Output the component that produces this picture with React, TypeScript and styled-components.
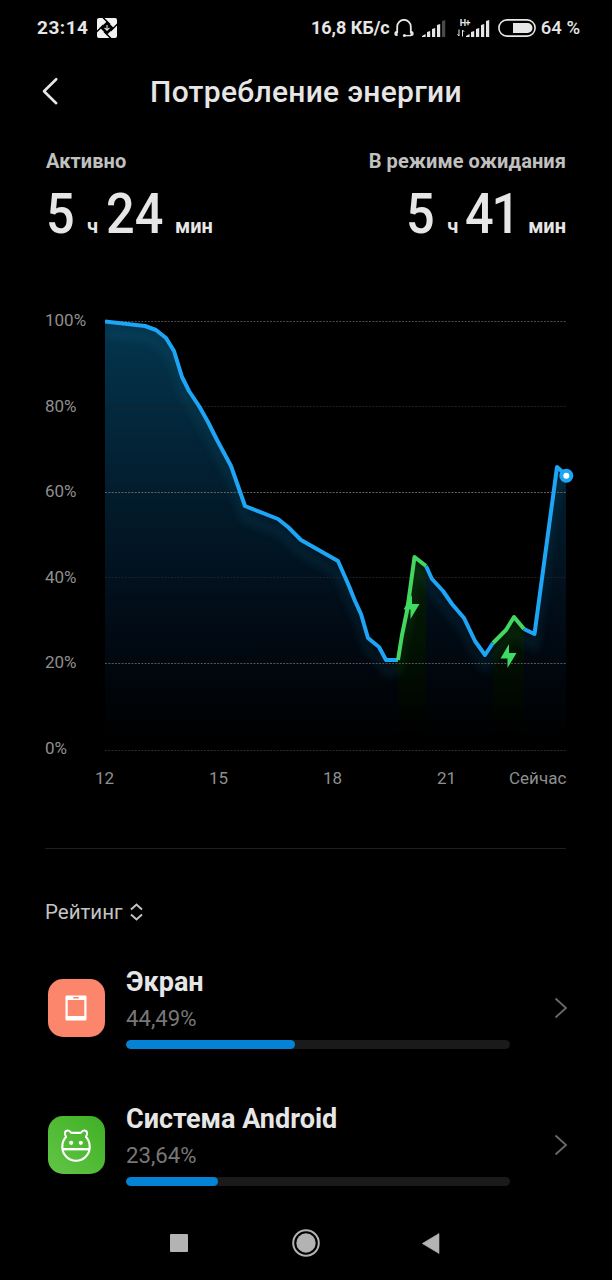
import React from "react";
import styled, { createGlobalStyle } from "styled-components";

const GlobalStyle = createGlobalStyle`
  * { box-sizing: border-box; }
  body { margin: 0; background: #000; font-family: Roboto, sans-serif; color: #e6e6e6; }
  svg { display: block; flex: none; }
`;

const Screen = styled.main`
  width: 612px;
  height: 1280px;
  overflow: hidden;
  display: flex;
  flex-direction: column;
  background: #000;
  & > * { flex-shrink: 0; }
`;

const StatusBar = styled.header`
  height: 56px;
  padding: 0 32px 0 37px;
  display: flex;
  align-items: center;
  justify-content: space-between;
`;

const StatusGroup = styled.div`
  display: flex;
  align-items: center;
`;

const StatusText = styled.span<{ $size?: number; $weight?: number; $spacing?: number }>`
  font-size: ${(p) => p.$size ?? 19}px;
  font-weight: ${(p) => p.$weight ?? 700};
  letter-spacing: ${(p) => p.$spacing ?? 0}px;
  line-height: 24px;
  white-space: nowrap;
`;

const TitleBar = styled.div`
  height: 72px;
  display: grid;
  grid-template-columns: 100px 1fr 100px;
  align-items: center;
`;

const BackButton = styled.button`
  width: 30px;
  height: 32px;
  margin: -2px 0 0 36px;
  padding: 0;
  border: 0;
  background: none;
`;

const Title = styled.h1`
  margin: 0;
  font-size: 30px;
  line-height: 40px;
  font-weight: 500;
  letter-spacing: 0.28px;
  text-align: center;
  white-space: nowrap;
`;

const Stats = styled.section`
  height: 182px;
  padding: 21px 46px 0 46px;
  display: flex;
  justify-content: space-between;
`;

const Stat = styled.div<{ $end?: boolean }>`
  display: flex;
  flex-direction: column;
  align-items: ${(p) => (p.$end ? "flex-end" : "flex-start")};
`;

const StatLabel = styled.span`
  font-size: 20px;
  line-height: 24px;
  font-weight: 700;
  letter-spacing: 0.08px;
  color: #c0c0c0;
`;

const Duration = styled.div`
  display: flex;
  align-items: baseline;
  height: 66px;
  margin-top: 8px;
`;

const Digits = styled.span<{ $width: number; $spacing?: number }>`
  width: ${(p) => p.$width}px;
  font-size: 56px;
  line-height: 66px;
  font-weight: 500;
  letter-spacing: ${(p) => p.$spacing ?? 0}px;
  white-space: nowrap;
  transform: scaleX(0.9);
  transform-origin: left;
`;

const Unit = styled.span<{ $width?: number }>`
  width: ${(p) => (p.$width ? `${p.$width}px` : "auto")};
  font-size: 20px;
  font-weight: 700;
`;

const ChartSection = styled.section`
  height: 538px;
  padding: 0 36px 0 45px;
  display: grid;
  grid-template-columns: 60px 471px;
  grid-template-rows: 442px 40px;
`;

const YAxis = styled.div`
  height: 451px;
  display: flex;
  flex-direction: column;
  justify-content: space-between;
  margin-top: -1px;
`;

const XAxis = styled.div`
  grid-column: 2;
  display: flex;
  width: 480px;
  margin-left: -10px;
  padding-top: 15px;
`;

const AxisLabel = styled.span<{ $width?: number }>`
  flex: none;
  width: ${(p) => (p.$width ? `${p.$width}px` : "auto")};
  font-size: 17px;
  line-height: 23px;
  color: #8f8f8f;
  white-space: nowrap;
`;

const Divider = styled.hr`
  width: 521px;
  height: 1px;
  margin: 0 0 0 45px;
  border: 0;
  background: #1f1f1f;
`;

const SortButton = styled.button`
  height: 30px;
  margin: 48px 0 0 45px;
  padding: 0;
  border: 0;
  background: none;
  display: flex;
  align-items: center;
  gap: 7px;
  font: 400 20.5px/30px Roboto, sans-serif;
  color: #c4c4c4;
`;

const AppList = styled.ul`
  margin: 0;
  padding: 39px 0 0;
  list-style: none;
  display: flex;
  flex-direction: column;
  gap: 37px;
`;

const AppRow = styled.li`
  height: 100px;
  padding: 0 44px 0 48px;
  display: grid;
  grid-template-columns: 78px 384px 1fr;
`;

const Tile = styled.div<{ $fill: string }>`
  width: 57px;
  height: 58px;
  margin-top: 13px;
  padding-right: 1px;
  border-radius: 15px;
  display: flex;
  align-items: center;
  justify-content: center;
  background: ${(p) => p.$fill};
`;

const AppInfo = styled.div`
  display: flex;
  flex-direction: column;
`;

const AppName = styled.span`
  font-size: 27px;
  line-height: 32px;
  font-weight: 700;
`;

const AppShare = styled.span`
  margin-top: 6px;
  font-size: 22.2px;
  line-height: 28px;
  color: #777;
`;

const Track = styled.div`
  height: 9px;
  margin-top: 8px;
  border-radius: 5px;
  background: #1a1a1a;
  overflow: hidden;
`;

const Fill = styled.div`
  height: 100%;
  border-radius: 5px;
  background: #0482d6;
`;

const ChevronCell = styled.div`
  display: flex;
  justify-content: flex-end;
  padding-top: 31px;
`;

const NavBar = styled.nav`
  height: 74px;
  margin-top: auto;
  padding: 0 170px 0 170px;
  display: flex;
  align-items: center;
  justify-content: space-between;
`;

type Point = [number, number];

const plotLeft = 105;
const plotTop = 310;

const segments: { charging: boolean; points: Point[] }[] = [
  {
    charging: false,
    points: [
      [105, 321.5], [145, 326], [156, 330], [166, 338], [174, 351], [182, 377], [189, 391],
      [199, 406], [208, 422], [217, 440], [231, 466], [245, 506], [278, 519], [288, 527],
      [301, 540], [338, 561], [349, 586], [355, 601], [361, 614], [368, 638], [379, 647],
      [386, 660], [398, 660],
    ],
  },
  { charging: true, points: [[398, 660], [402, 635], [407, 611], [410, 590], [414.5, 557], [426, 566]] },
  {
    charging: false,
    points: [[426, 566], [432, 579], [443, 591], [452, 604], [464, 618], [475, 641], [485, 655], [493, 643]],
  },
  { charging: true, points: [[493, 643], [506, 630], [514, 617], [524, 629]] },
  { charging: false, points: [[524, 629], [534.5, 634], [557, 467], [566, 475]] },
];

const gridLines = [
  { y: 321.5, color: "#4c4c4c" },
  { y: 406.5, color: "#202020" },
  { y: 492.5, color: "#626262" },
  { y: 577.5, color: "#202020" },
  { y: 663.5, color: "#565656" },
  { y: 750.5, color: "#2c2c2c" },
];

const bolts: Point[] = [[411.5, 607], [508.5, 656]];

const linePath = (pts: Point[]) => "M" + pts.map((p) => p.join(" ")).join("L");
const areaPath = (pts: Point[]) => `${linePath(pts)}V750H${pts[0][0]}Z`;

function BatteryChart() {
  return (
    <svg width="471" height="442" viewBox={`${plotLeft} ${plotTop} 471 442`}>
      <defs>
        <linearGradient id="blueFill" gradientUnits="userSpaceOnUse" x1="0" y1="321" x2="0" y2="740">
          <stop offset="0" stopColor="#04364f" />
          <stop offset="0.45" stopColor="#021a2a" />
          <stop offset="0.75" stopColor="#010a14" />
          <stop offset="1" stopColor="#000" />
        </linearGradient>
        <linearGradient id="greenFill" gradientUnits="userSpaceOnUse" x1="0" y1="550" x2="0" y2="735">
          <stop offset="0" stopColor="#051f08" />
          <stop offset="0.5" stopColor="#021203" />
          <stop offset="1" stopColor="#000" />
        </linearGradient>
        <filter id="glow" x="-10%" y="-30%" width="120%" height="170%">
          <feGaussianBlur stdDeviation="4" />
        </filter>
        <clipPath id="areaClip">
          {segments.map((s, i) => (
            <path key={i} d={areaPath(s.points)} />
          ))}
        </clipPath>
      </defs>
      {segments.map((s, i) => (
        <path key={i} d={areaPath(s.points)} fill={s.charging ? "url(#greenFill)" : "url(#blueFill)"} />
      ))}
      <g clipPath="url(#areaClip)">
        <g filter="url(#glow)" opacity="0.13" transform="translate(0 12)">
          {segments.map((s, i) => (
            <path key={i} d={linePath(s.points)} fill="none" stroke={s.charging ? "#2f9a3c" : "#1a83a4"} strokeWidth="9" />
          ))}
        </g>
      </g>
      {gridLines.map((g) => (
        <line key={g.y} x1="105" x2="566" y1={g.y} y2={g.y} stroke={g.color} strokeDasharray="2 1.3" />
      ))}
      {segments.map((s, i) => (
        <path
          key={i}
          d={linePath(s.points)}
          fill="none"
          stroke={s.charging ? "#43d660" : "#1da5f6"}
          strokeWidth="4"
          strokeLinejoin="round"
        />
      ))}
      {bolts.map(([x, y]) => (
        <path key={x} transform={`translate(${x} ${y})`} d="M0.5-12L-8 2.5H-1V12L8-3H0.5Z" fill="#3fdc62" />
      ))}
      <circle cx="566.3" cy="475.8" r="5" fill="#fff" stroke="#1da5f6" strokeWidth="4" />
    </svg>
  );
}

function ShutterIcon() {
  return (
    <svg width="20" height="20" viewBox="0 0 20 20">
      <rect width="20" height="20" rx="2" fill="#f2f2f2" />
      <path d="M10 3.2L16.8 10L10 16.8L3.2 10Z" fill="#000" />
      <path d="M5.5 -1L13 6.5M21 5.5L13.5 13M14.5 21L7 13.5M-1 14.5L6.5 7" stroke="#000" strokeWidth="1.5" />
      <path d="M10 7V12M7.6 9.8L10 12.2L12.4 9.8" stroke="#e6e6e6" strokeWidth="1.1" fill="none" />
    </svg>
  );
}

function HeadsetIcon() {
  return (
    <svg width="20" height="18" viewBox="0 0 20 18">
      <path d="M3.2 14V7.6A6.8 6.8 0 0 1 16.8 7.6V14" fill="none" stroke="#e6e6e6" strokeWidth="1.8" />
      <path d="M3.6 12V17H2Q0.3 17 0.3 14.6Q0.3 12.6 2 12ZM16.4 12V17H18Q19.7 17 19.7 14.6Q19.7 12.6 18 12Z" fill="#e6e6e6" />
      <path d="M10 16.6H17" stroke="#e6e6e6" strokeWidth="1.4" />
      <circle cx="10.4" cy="16.4" r="1.5" fill="#e6e6e6" />
    </svg>
  );
}

function Signal({ full }: { full?: boolean }) {
  return (
    <svg width="24" height="17" viewBox="0 0 24 17">
      {[3, 6, 9, 13, 17].map((h, i) => (
        <path
          key={h}
          d={`M${i * 5} 17V${17 - h + (i === 0 ? 2 : 1)}L${i * 5 + (i === 0 ? 3.6 : 3.2)} ${17 - h}V17Z`}
          fill={!full && i === 4 ? "#4a4a4a" : "#e6e6e6"}
        />
      ))}
    </svg>
  );
}

const NetworkGroup = styled.div`
  display: flex;
  align-items: flex-end;
  margin-left: 11px;
`;

const NetworkType = styled.div`
  width: 9px;
  display: flex;
  flex-direction: column;
  gap: 1px;
  white-space: nowrap;
  font-size: 9px;
  line-height: 9px;
  font-weight: 700;
`;

const NetworkName = styled.span`
  width: 12px;
  margin-left: 3px;
  letter-spacing: -0.5px;
`;

const Gap = styled.span<{ $w: number }>`
  width: ${(p) => p.$w}px;
`;

function BatteryIcon() {
  return (
    <svg width="38" height="18" viewBox="0 0 38 18">
      <rect x="0.9" y="0.9" width="36.2" height="16.2" rx="8.1" fill="none" stroke="#e6e6e6" strokeWidth="1.6" />
      <path d="M15 4H29.5A5 5 0 0 1 29.5 14H15Z" fill="#e6e6e6" />
    </svg>
  );
}

function ScreenIcon() {
  return (
    <svg width="22" height="26" viewBox="0 0 22 26">
      <rect x="0.5" y="0.5" width="21" height="25" rx="1" fill="#fff" />
      <rect x="2.7" y="5" width="16.6" height="16" fill="#fb866b" />
      <rect x="8" y="2" width="6" height="1.6" rx="0.8" fill="#fb866b" />
    </svg>
  );
}

function AndroidIcon() {
  return (
    <svg width="30" height="33" viewBox="0 0 30 33" fill="none" stroke="#fff" strokeWidth="2.1">
      <path d="M5.4 8C3 5.8 3.5 1.5 6.8 1.5C9.2 1.5 9.3 3.9 10.6 3.9H19.4C20.7 3.9 20.8 1.5 23.2 1.5C26.5 1.5 27 5.8 24.6 8" />
      <path d="M5.4 7.5C2.6 10.2 1.3 13.6 1.3 18A13.7 13.7 0 0 0 28.7 18C28.7 13.6 27.4 10.2 24.6 7.5" />
      <path d="M1.3 20.2H28.7" strokeWidth="2.4" />
      <circle cx="10.2" cy="13.8" r="2.1" fill="#fff" stroke="none" />
      <circle cx="19.8" cy="13.8" r="2.1" fill="#fff" stroke="none" />
    </svg>
  );
}

const apps = [
  { name: "Экран", share: "44,49%", percent: 44.1, tile: "#fb866b", icon: <ScreenIcon /> },
  {
    name: "Система Android",
    share: "23,64%",
    percent: 24,
    tile: "linear-gradient(45deg, #62c546, #40b025)",
    icon: <AndroidIcon />,
  },
];

export default function App() {
  return (
    <>
      <GlobalStyle />
      <Screen>
        <StatusBar>
          <StatusGroup>
            <StatusText $spacing={0.5}>23:14</StatusText>
            <Gap $w={9} />
            <ShutterIcon />
          </StatusGroup>
          <StatusGroup>
            <StatusText $size={18}>16,8 КБ/с</StatusText>
            <Gap $w={4} />
            <HeadsetIcon />
            <Gap $w={8} />
            <Signal />
            <NetworkGroup>
              <NetworkType>
                <NetworkName>H+</NetworkName>
                <svg width="8" height="8" viewBox="0 0 8 8" fill="none" stroke="#e6e6e6">
                  <path d="M2 0.5V7M0.4 5.2L2 7M5.5 7.5V1M5.5 1L7.2 2.8" />
                </svg>
              </NetworkType>
              <Signal full />
            </NetworkGroup>
            <Gap $w={8} />
            <BatteryIcon />
            <Gap $w={5} />
            <StatusText $size={18.5} $weight={500}>64 %</StatusText>
          </StatusGroup>
        </StatusBar>

        <TitleBar>
          <BackButton aria-label="Назад">
            <svg width="30" height="32" viewBox="0 0 30 32">
              <path d="M20.2 4.2L8 16.2L20.2 28.2" fill="none" stroke="#e6e6e6" strokeWidth="2.6" strokeLinejoin="round" strokeLinecap="round" />
            </svg>
          </BackButton>
          <Title>Потребление энергии</Title>
        </TitleBar>

        <Stats>
          <Stat>
            <StatLabel>Активно</StatLabel>
            <Duration>
              <Digits $width={41}>5</Digits>
              <Unit $width={19}>ч</Unit>
              <Digits $width={69}>24</Digits>
              <Unit>мин</Unit>
            </Duration>
          </Stat>
          <Stat $end>
            <StatLabel>В режиме ожидания</StatLabel>
            <Duration>
              <Digits $width={41}>5</Digits>
              <Unit $width={18}>ч</Unit>
              <Digits $width={63} $spacing={-2.5}>41</Digits>
              <Unit>мин</Unit>
            </Duration>
          </Stat>
        </Stats>

        <ChartSection>
          <YAxis>
            {["100%", "80%", "60%", "40%", "20%", "0%"].map((t) => (
              <AxisLabel key={t}>{t}</AxisLabel>
            ))}
          </YAxis>
          <BatteryChart />
          <XAxis>
            <AxisLabel $width={114}>12</AxisLabel>
            <AxisLabel $width={114}>15</AxisLabel>
            <AxisLabel $width={114}>18</AxisLabel>
            <AxisLabel $width={72}>21</AxisLabel>
            <AxisLabel>Сейчас</AxisLabel>
          </XAxis>
        </ChartSection>

        <Divider />
        <SortButton>
          Рейтинг
          <svg width="13" height="18" viewBox="0 0 13 18">
            <path d="M1 6.5L6.5 1.5L12 6.5M1 11.5L6.5 16.5L12 11.5" fill="none" stroke="#c4c4c4" strokeWidth="2" />
          </svg>
        </SortButton>

        <AppList>
          {apps.map((a) => (
            <AppRow key={a.name}>
              <Tile $fill={a.tile}>{a.icon}</Tile>
              <AppInfo>
                <AppName>{a.name}</AppName>
                <AppShare>{a.share}</AppShare>
                <Track>
                  <Fill style={{ width: `${a.percent}%` }} />
                </Track>
              </AppInfo>
              <ChevronCell>
                <svg width="14" height="22" viewBox="0 0 14 22">
                  <path d="M1.5 1.5L12 11L1.5 20.5" fill="none" stroke="#6a6a6a" strokeWidth="1.8" />
                </svg>
              </ChevronCell>
            </AppRow>
          ))}
        </AppList>

        <NavBar>
          <svg width="20" height="18" viewBox="0 0 20 18">
            <rect width="18" height="18" rx="1" fill="#b3b3b3" />
          </svg>
          <svg width="28" height="28" viewBox="0 0 28 28">
            <circle cx="14" cy="14" r="12.8" fill="none" stroke="#b3b3b3" strokeWidth="2" />
            <circle cx="14" cy="14" r="9.7" fill="#b3b3b3" />
          </svg>
          <svg width="20" height="21" viewBox="0 0 20 21">
            <path d="M0.3 10.5L17 0.5V20.5Z" fill="#b3b3b3" stroke="#b3b3b3" strokeWidth="0.6" strokeLinejoin="round" />
          </svg>
        </NavBar>
      </Screen>
    </>
  );
}
